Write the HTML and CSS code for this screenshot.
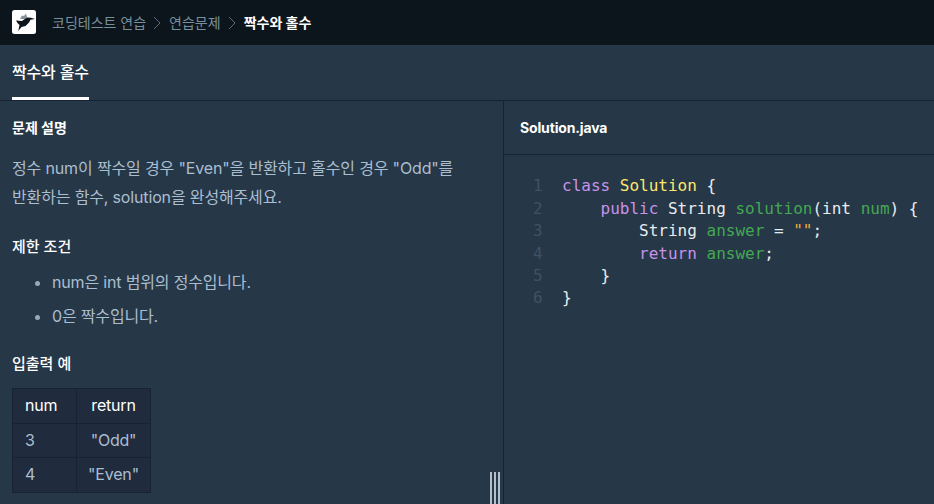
FILE: index.html
```html
<!DOCTYPE html>
<html lang="ko">
<head>
<meta charset="utf-8">
<title>짝수와 홀수</title>
<link rel="stylesheet" href="styles.css">
</head>
<body>
<header class="topbar">
  <svg class="logo" width="24" height="24" viewBox="0 0 24 24">
    <rect width="24" height="24" rx="2.500" fill="#fff"/>
    <path d="M8 9L10 5.500L12 6L14 3.500L15.500 9Z" fill="#8a929a"/>
    <path d="M4 10.500L10 11L12 9.500L15.500 7.500L19 7.800L23 9L18.500 9.800L17 12.500L13.500 16L9.500 17L6.300 21L7.500 15L5.500 13Z" fill="#0c151c"/>
  </svg>
  <nav class="crumbs">
    <span class="crumb">코딩테스트 연습</span>
    <svg class="chev" width="8" height="14" viewBox="0 0 8 14"><path d="M1 1l6 6-6 6" fill="none" stroke="#5c6b78" stroke-width="1"/></svg>
    <span class="crumb">연습문제</span>
    <svg class="chev" width="8" height="14" viewBox="0 0 8 14"><path d="M1 1l6 6-6 6" fill="none" stroke="#5c6b78" stroke-width="1"/></svg>
    <strong class="crumb-now">짝수와 홀수</strong>
  </nav>
</header>
<div class="tabbar"><div class="tab">짝수와 홀수</div></div>
<main class="split">
  <section class="desc">
    <h2 class="h-first">문제 설명</h2>
    <p class="para">정수 num이 짝수일 경우 "Even"을 반환하고 홀수인 경우 "Odd"를 반환하는 함수, solution을 완성해주세요.</p>
    <h2 class="h-next">제한 조건</h2>
    <ul class="rules">
      <li>num은 int 범위의 정수입니다.</li>
      <li>0은 짝수입니다.</li>
    </ul>
    <h2 class="h-io">입출력 예</h2>
    <table class="io">
      <thead><tr><th class="col-a">num</th><th class="col-b">return</th></tr></thead>
      <tbody>
        <tr><td class="left">3</td><td>"Odd"</td></tr>
        <tr><td class="left">4</td><td>"Even"</td></tr>
      </tbody>
    </table>
    <div class="grip"><i></i><i></i><i></i></div>
  </section>
  <section class="editor">
    <div class="filebar">Solution.java</div>
    <div class="code">
      <div class="gutter">1<br>2<br>3<br>4<br>5<br>6</div>
      <pre class="src"><span class="kw">class</span> <span class="cls">Solution</span> {
    <span class="kw">public</span> String <span class="fn">solution</span>(int <span class="fn">num</span>) {
        String <span class="fn">answer</span> = <span class="str">""</span>;
        <span class="kw">return</span> <span class="fn">answer</span>;
    }
}</pre>
    </div>
  </section>
</main>
</body>
</html>
```
FILE: styles.css
```css
* { box-sizing: border-box; }
html, body { margin: 0; height: 100%; }
body {
  width: 934px;
  height: 504px;
  overflow: hidden;
  background: #263747;
  color: #abbed0;
  font-family: Inter, "Noto Sans CJK KR", sans-serif;
  display: flex;
  flex-direction: column;
}
.topbar {
  height: 45px;
  flex: none;
  background: #0c151c;
  display: flex;
  align-items: center;
  padding: 0 0 1px 12px;
}
.logo { flex: none; margin-right: 16px; }
.crumbs { display: flex; align-items: center; font-size: 14px; }
.crumb { color: #78909c; }
.crumb-now { color: #fff; font-weight: 700; }
.chev { margin: 1px 8px 0 7px; }
.tabbar {
  height: 56px;
  flex: none;
  padding-left: 12px;
  border-bottom: 1px solid #172334;
}
.tab {
  display: inline-block;
  height: 55px;
  padding-top: 15px;
  font-size: 16px;
  line-height: 24px;
  font-weight: 500;
  color: #fff;
  border-bottom: 3px solid #fff;
  width: 77px;
  white-space: nowrap;
  letter-spacing: -0.160px;
}
.split { flex: 1; display: flex; min-height: 0; }
.desc {
  position: relative;
  width: 504px;
  flex: none;
  padding: 0 12px;
  border-right: 1px solid #172334;
  overflow: hidden;
}
h2 { margin: 0; font-size: 15px; line-height: 22px; font-weight: 500; color: #fff; }
.h-first { margin-top: 16px; font-size: 14px; font-weight: 700; }
.para { margin: 15px 0 0; font-size: 16px; line-height: 29px; width: 448px; letter-spacing: -0.150px; }
.h-next { margin-top: 24px; }
.rules { margin: 12px 0 0; padding-left: 40px; font-size: 16px; line-height: 24px; letter-spacing: -0.170px; }
.rules li { margin-bottom: 10px; }
.rules li::marker { color: #98a8b9; }
.h-io { margin-top: 25px; }
.io {
  margin-top: 13px;
  border-collapse: collapse;
  background: #202b3d;
  font-size: 16px;
  letter-spacing: -0.200px;
}
.io th, .io td {
  height: 34.500px;
  padding: 0 9px 1px;
  border: 1px solid #172334;
  text-align: center;
  line-height: 22px;
}
.io .left, .io .col-a { padding-left: 12px; }
.col-a { width: 64px; }
.col-b { width: 74px; }
.io th { font-weight: 400; color: #fff; }
.io .left, .io th:first-child { text-align: left; }
.grip {
  position: absolute;
  left: 490px;
  bottom: 0;
  height: 32px;
  display: flex;
  gap: 2px;
}
.grip i { width: 2px; background: #b2c0cc; }
.editor { flex: 1; min-width: 0; }
.filebar {
  height: 54px;
  padding-left: 16px;
  border-bottom: 1px solid #172334;
  font-size: 14px;
  font-weight: 700;
  line-height: 54px;
  letter-spacing: -0.150px;
  color: #fff;
}
.code {
  display: flex;
  padding-top: 20.300px;
  font-family: "DejaVu Sans Mono", monospace;
  font-size: 16px;
  line-height: 22.400px;
}
.gutter { width: 58px; padding-left: 29px; color: #3f5265; }
.src { margin: 0; font: inherit; color: #e9ecef; }
.kw { color: #c792ea; }
.cls { color: #ffe66d; }
.fn { color: #44a853; }
.str { color: #f0a93f; }
```
